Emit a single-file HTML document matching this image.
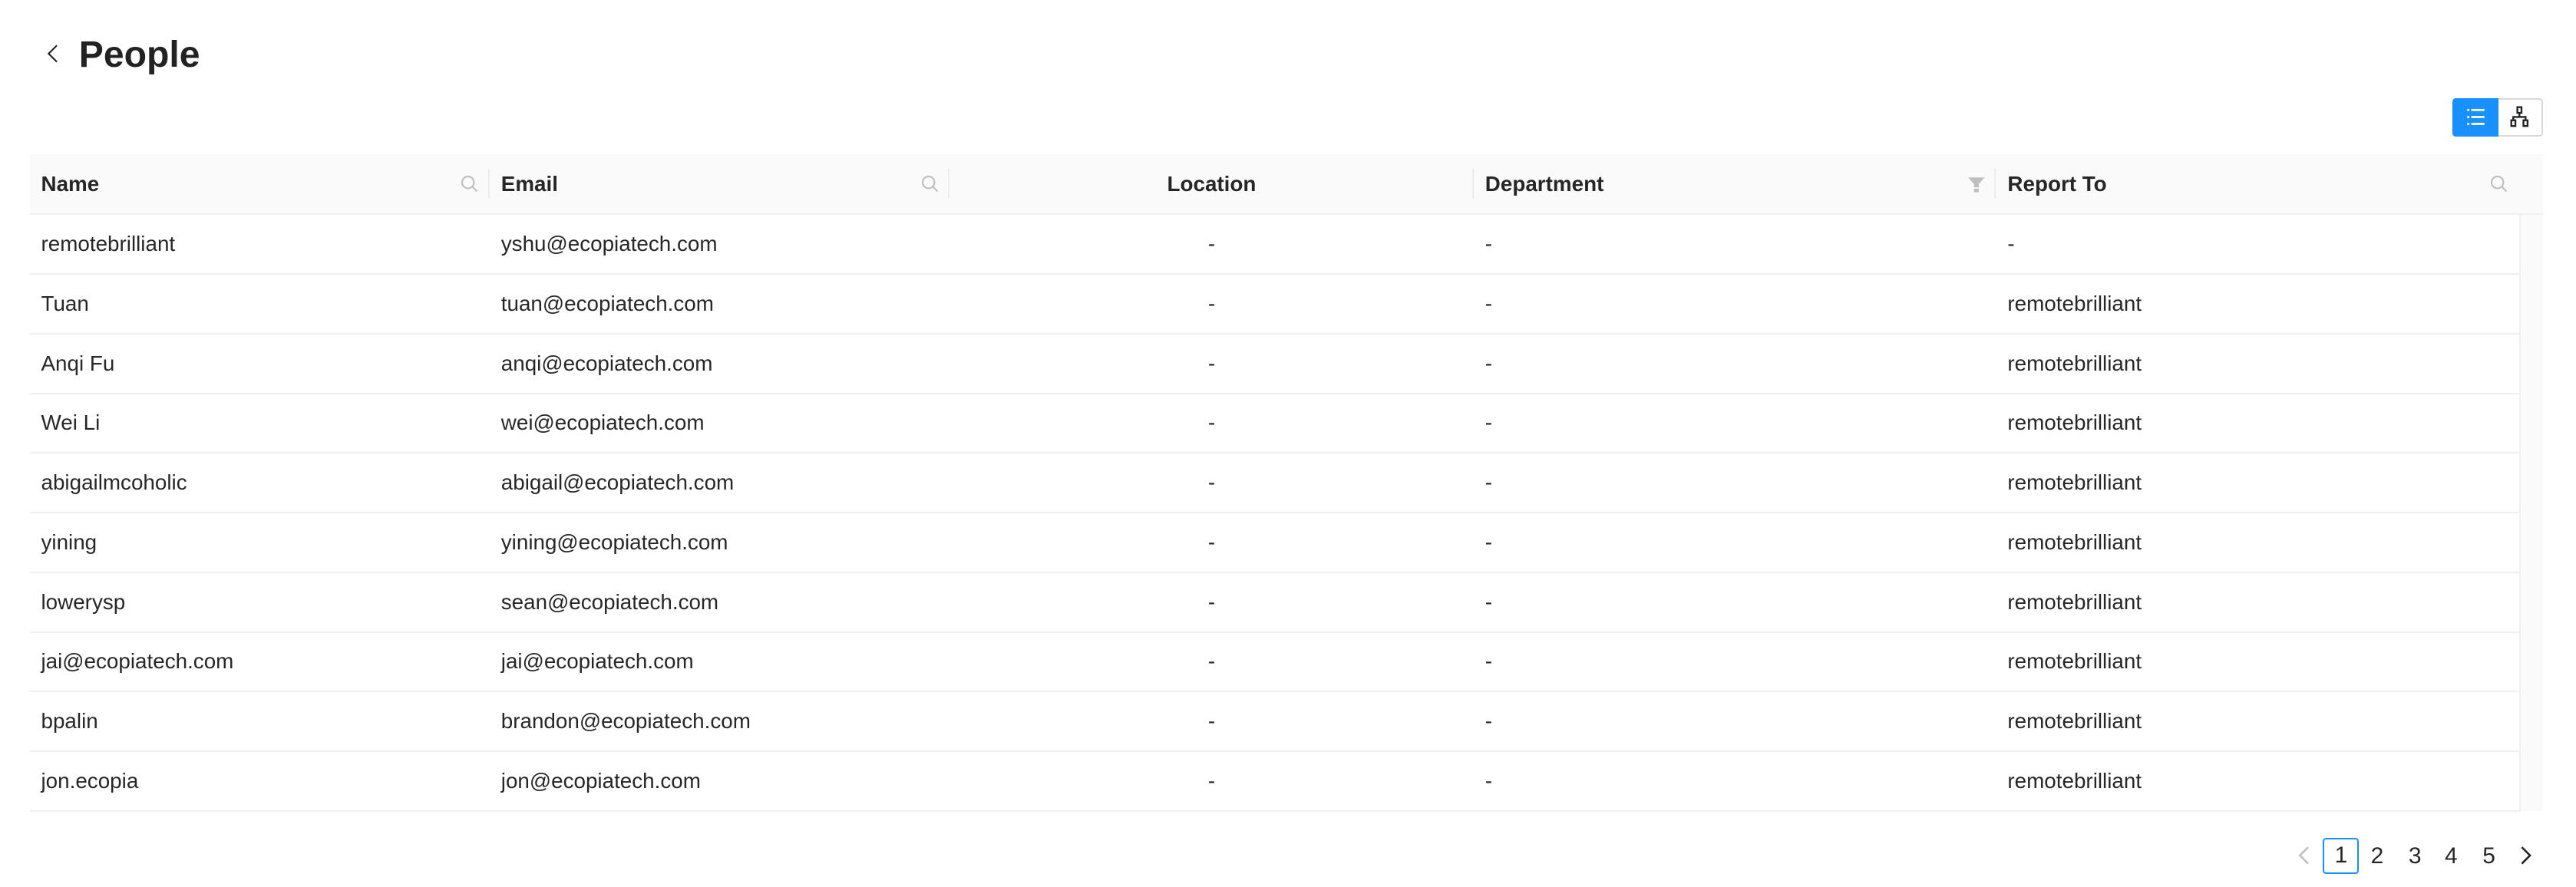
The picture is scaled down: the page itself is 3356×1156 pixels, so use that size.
<!DOCTYPE html>
<html><head><meta charset="utf-8"><style>
html,body{margin:0;padding:0;background:#fff;}
body{width:3356px;height:1156px;overflow:hidden;font-family:"Liberation Sans",sans-serif;color:rgba(0,0,0,.85);}
#w{zoom:2.1403;width:1568px;height:540px;position:relative;}
.a{position:absolute;}
.title{left:48px;top:20px;font-size:22.5px;font-weight:bold;color:#222;}
.tog{top:60px;height:23px;box-sizing:border-box;}
table{position:absolute;left:18px;top:94px;width:1530px;border-collapse:collapse;font-size:13px;table-layout:fixed;}
th{background:#fafafa;height:36px;text-align:left;font-weight:bold;padding:0 7px;border-bottom:1px solid #f0f0f0;position:relative;color:rgba(0,0,0,.85);}
td{height:35.4px;padding:0 7px;border-bottom:1px solid #f0f0f0;}
.c{text-align:center;}
th .sep{position:absolute;right:0;top:9px;height:18px;width:1px;background:#ececec;}
th svg{position:absolute;top:12px;}
td.sb{background:#fafafa;border-left:1px solid #f0f0f0;padding:0;border-bottom:none;}
.pg{top:510px;font-size:14px;height:22px;line-height:22px;text-align:center;width:22px;}
</style></head><body><div id="w">
<svg class="a" style="left:27px;top:26px" width="10" height="14" viewBox="0 0 10 14"><path d="M7.5 1.5L2.5 6.5l5 5" fill="none" stroke="#222" stroke-width="1"/></svg>
<div class="a title">People</div>
<div class="a tog" style="left:1493px;width:28px;background:#1890ff;border-radius:2px 0 0 2px;">
<svg width="28" height="23" viewBox="0 0 28 23"><g fill="#fff"><rect x="9" y="6.5" width="1.3" height="1.3"/><rect x="9" y="10.8" width="1.3" height="1.3"/><rect x="9" y="15" width="1.3" height="1.3"/><rect x="11.5" y="6.5" width="8" height="1.3"/><rect x="11.5" y="10.8" width="8" height="1.3"/><rect x="11.5" y="15" width="8" height="1.3"/></g></svg></div>
<div class="a tog" style="left:1521px;width:27px;border:1px solid #d9d9d9;border-left:none;border-radius:0 2px 2px 0;">
<svg width="26" height="21" viewBox="0 0 26 21"><g fill="none" stroke="#222" stroke-width="1.1"><rect x="11.5" y="4.5" width="2.5" height="3.5"/><path d="M12.75 8v2.5M9 12.5v-2h7.5v2"/><rect x="7.8" y="12.5" width="2.5" height="3.5"/><rect x="15.2" y="12.5" width="2.5" height="3.5"/></g></svg></div>
<table>
<colgroup><col style="width:280px"><col style="width:280px"><col style="width:319px"><col style="width:318px"><col style="width:319px"><col style="width:14px"></colgroup>
<tr><th>Name<svg style="left:262px" width="12" height="12" viewBox="0 0 12 12"><circle cx="5" cy="5" r="3.6" fill="none" stroke="#bfbfbf" stroke-width="1"/><path d="M7.6 7.6L10.5 10.5" stroke="#bfbfbf" stroke-width="1"/></svg><span class="sep"></span></th>
<th>Email<svg style="left:262px" width="12" height="12" viewBox="0 0 12 12"><circle cx="5" cy="5" r="3.6" fill="none" stroke="#bfbfbf" stroke-width="1"/><path d="M7.6 7.6L10.5 10.5" stroke="#bfbfbf" stroke-width="1"/></svg><span class="sep"></span></th>
<th class="c">Location<span class="sep"></span></th>
<th>Department<svg style="left:300px" width="12" height="12" viewBox="0 0 12 12"><path d="M1 2h10L7.5 6v2H4.5V6z M4.5 8.8h3V11h-3z" fill="#bfbfbf"/></svg><span class="sep"></span></th>
<th colspan="2">Report To<svg style="left:300px" width="12" height="12" viewBox="0 0 12 12"><circle cx="5" cy="5" r="3.6" fill="none" stroke="#bfbfbf" stroke-width="1"/><path d="M7.6 7.6L10.5 10.5" stroke="#bfbfbf" stroke-width="1"/></svg></th></tr>
<tr><td>remotebrilliant</td><td>yshu@ecopiatech.com</td><td class="c">-</td><td>-</td><td>-</td><td class="sb" rowspan="10"></td></tr>
<tr><td>Tuan</td><td>tuan@ecopiatech.com</td><td class="c">-</td><td>-</td><td>remotebrilliant</td></tr>
<tr><td>Anqi Fu</td><td>anqi@ecopiatech.com</td><td class="c">-</td><td>-</td><td>remotebrilliant</td></tr>
<tr><td>Wei Li</td><td>wei@ecopiatech.com</td><td class="c">-</td><td>-</td><td>remotebrilliant</td></tr>
<tr><td>abigailmcoholic</td><td>abigail@ecopiatech.com</td><td class="c">-</td><td>-</td><td>remotebrilliant</td></tr>
<tr><td>yining</td><td>yining@ecopiatech.com</td><td class="c">-</td><td>-</td><td>remotebrilliant</td></tr>
<tr><td>lowerysp</td><td>sean@ecopiatech.com</td><td class="c">-</td><td>-</td><td>remotebrilliant</td></tr>
<tr><td>jai@ecopiatech.com</td><td>jai@ecopiatech.com</td><td class="c">-</td><td>-</td><td>remotebrilliant</td></tr>
<tr><td>bpalin</td><td>brandon@ecopiatech.com</td><td class="c">-</td><td>-</td><td>remotebrilliant</td></tr>
<tr><td>jon.ecopia</td><td>jon@ecopiatech.com</td><td class="c">-</td><td>-</td><td>remotebrilliant</td></tr>
</table>
<svg class="a" style="left:1398px;top:515px" width="10" height="12" viewBox="0 0 10 12"><path d="M7 1L2 6l5 5" fill="none" stroke="#bfbfbf" stroke-width="1.2"/></svg>
<div class="a pg" style="left:1414px;border:1px solid #1890ff;border-radius:2px;box-sizing:border-box;line-height:20px;">1</div>
<div class="a pg" style="left:1436px">2</div>
<div class="a pg" style="left:1459px">3</div>
<div class="a pg" style="left:1481px">4</div>
<div class="a pg" style="left:1504px">5</div>
<svg class="a" style="left:1532px;top:515px" width="10" height="12" viewBox="0 0 10 12"><path d="M3 1l5 5-5 5" fill="none" stroke="#222" stroke-width="1.2"/></svg>
</div></body></html>
